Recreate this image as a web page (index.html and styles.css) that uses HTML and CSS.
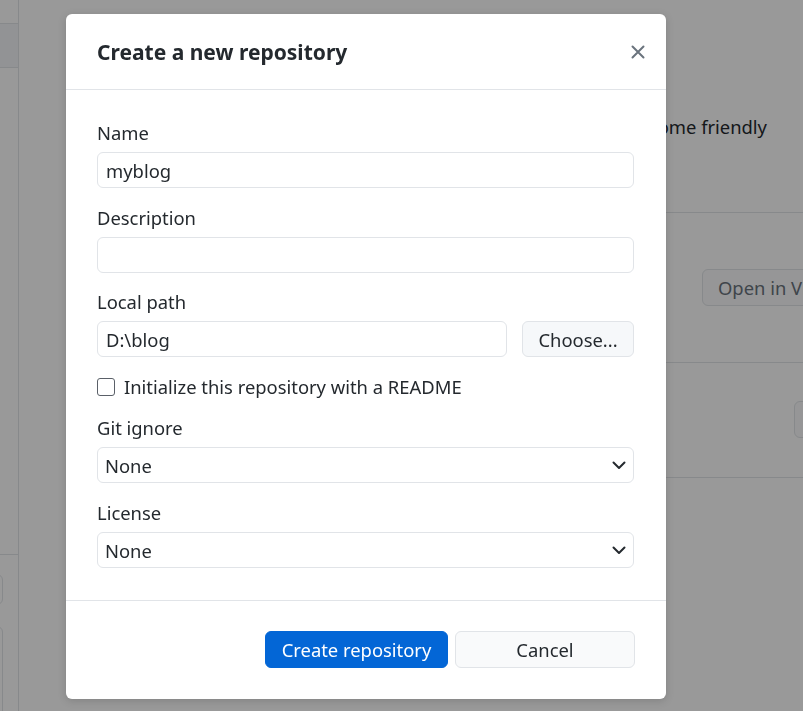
FILE: index.html
```html
<!DOCTYPE html>
<html lang="en">
<head>
<meta charset="utf-8">
<title>Create a new repository</title>
<link rel="stylesheet" href="styles.css">
</head>
<body>
<div class="app">
  <aside class="sidebar">
    <div class="sb-top"></div>
    <div class="sb-tab"></div>
    <div class="sb-fill"></div>
    <div class="sb-bottom">
      <div class="sb-box sb-box1"></div>
      <div class="sb-box sb-box2"></div>
    </div>
  </aside>
  <main class="main">
    <div class="main-left"></div>
    <section class="pane">
      <div class="pane-row row1"><p class="pane-text">become friendly</p></div>
      <div class="pane-row row2"><span class="ghost-btn">Open in Visual Studio Code</span></div>
      <div class="pane-row row3"><span class="ghost-btn ghost-far"></span></div>
      <div class="pane-row row4"></div>
    </section>
  </main>
</div>
<div class="overlay"></div>
<div class="modal" role="dialog" aria-labelledby="dlg-title">
  <header class="modal-header">
    <h1 id="dlg-title" class="modal-title">Create a new repository</h1>
    <button class="close-btn" aria-label="Close">
      <svg width="14" height="14" viewBox="0 0 14 14"><path d="M1.5 1.5 L12.5 12.5 M12.5 1.5 L1.5 12.5" stroke="#6a737d" stroke-width="2" stroke-linecap="round" fill="none"/></svg>
    </button>
  </header>
  <div class="modal-body">
    <div class="field">
      <label class="label">Name</label>
      <div class="input">myblog</div>
    </div>
    <div class="field">
      <label class="label">Description</label>
      <div class="input"></div>
    </div>
    <div class="field">
      <label class="label">Local path</label>
      <div class="path-row">
        <div class="input path-input">D:\blog</div>
        <button class="btn choose-btn">Choose...</button>
      </div>
    </div>
    <div class="check-row">
      <span class="checkbox"></span>
      <span class="check-label">Initialize this repository with a README</span>
    </div>
    <div class="field">
      <label class="label">Git ignore</label>
      <div class="input select">None
        <svg class="chev" width="14" height="9" viewBox="0 0 14 9"><path d="M1.5 1.5 L7 7 L12.5 1.5" stroke="#24292e" stroke-width="2" fill="none" stroke-linecap="round" stroke-linejoin="round"/></svg>
      </div>
    </div>
    <div class="field">
      <label class="label">License</label>
      <div class="input select">None
        <svg class="chev" width="14" height="9" viewBox="0 0 14 9"><path d="M1.5 1.5 L7 7 L12.5 1.5" stroke="#24292e" stroke-width="2" fill="none" stroke-linecap="round" stroke-linejoin="round"/></svg>
      </div>
    </div>
  </div>
  <footer class="modal-footer">
    <button class="btn btn-primary">Create repository</button>
    <button class="btn btn-cancel">Cancel</button>
  </footer>
</div>
</body>
</html>
```
FILE: styles.css
```css
* { box-sizing: border-box; }
html, body { margin: 0; padding: 0; }
body {
  width: 803px;
  height: 711px;
  overflow: hidden;
  background: #ffffff;
  font-family: "Noto Sans", "Segoe UI", sans-serif;
  color: #24292e;
}
.app {
  display: flex;
  height: 711px;
}
.sidebar {
  width: 19px;
  flex: 0 0 19px;
  border-right: 1px solid #e1e4e8;
  display: flex;
  flex-direction: column;
  overflow: hidden;
}
.sb-top { height: 24px; border-bottom: 1px solid #e1e4e8; }
.sb-tab { height: 44px; border-bottom: 1px solid #e1e4e8; background: #f4f6f8; }
.sb-fill { flex: 1; border-bottom: 1px solid #e1e4e8; }
.sb-bottom { height: 156px; padding-top: 19px; }
.sb-box {
  width: 12px;
  margin-left: -9px;
  border: 1px solid #e1e4e8;
  border-radius: 6px;
}
.sb-box1 { height: 31px; }
.sb-box2 { height: 120px; margin-top: 21px; }
.main { flex: 1; display: flex; min-width: 0; }
.main-left { flex: 0 0 581px; }
.pane { flex: 1; min-width: 0; display: flex; flex-direction: column; overflow: hidden; }
.pane-row { border-bottom: 1px solid #e1e4e8; }
.row1 {
  height: 213px;
  padding-top: 115px;
  padding-right: 36px;
  display: flex;
  justify-content: flex-end;
}
.row2 { height: 150px; padding-top: 56px; padding-left: 102px; white-space: nowrap; }
.row3 { height: 115px; padding-top: 38px; padding-left: 194px; white-space: nowrap; }
.row4 { flex: 1; border-bottom: none; }
.pane-text { margin: 0; font-size: 18.4px; line-height: 24px; white-space: nowrap; color: #24292e; }
.ghost-btn {
  display: inline-flex;
  align-items: center;
  height: 37px;
  padding: 0 15px;
  border: 1px solid #e1e4e8;
  border-radius: 6px;
  font-size: 18.4px;
  color: #6a737d;
  white-space: nowrap;
  background: #fafbfc;
  vertical-align: top;
}
.ghost-far { width: 60px; }
.overlay {
  position: fixed;
  inset: 0;
  background: rgba(0, 0, 0, 0.4);
}
.modal {
  position: absolute;
  left: 66px;
  top: 14px;
  width: 600px;
  background: #ffffff;
  border-radius: 6px;
  box-shadow: 0 2px 8px rgba(0, 0, 0, 0.15);
}
.modal-header {
  height: 76px;
  border-bottom: 1px solid #e1e4e8;
  display: flex;
  align-items: center;
  justify-content: space-between;
  padding: 0 21px 0 31px;
}
.modal-title {
  margin: 0;
  font-size: 21px;
  font-weight: 700;
  color: #24292e;
}
.close-btn {
  border: 0;
  background: none;
  padding: 0;
  width: 14px;
  height: 14px;
  display: flex;
}
.modal-body {
  padding: 31px 32px 32px 31px;
  display: flex;
  flex-direction: column;
  gap: 17.5px;
}
.field { display: flex; flex-direction: column; gap: 7px; }
.label { font-size: 18.4px; line-height: 24px; color: #24292e; }
.input {
  height: 36px;
  border: 1px solid #e1e4e8;
  border-radius: 6px;
  padding: 0 8px;
  font-size: 18.4px;
  line-height: 35px;
  color: #24292e;
  background: #fff;
}
.select {
  display: flex;
  align-items: center;
  justify-content: space-between;
  padding: 1px 7px 0 7px;
}
.path-row { display: flex; gap: 15px; }
.path-input { flex: 1; }
.btn {
  font-family: inherit;
  font-size: 18.4px;
  height: 37px;
  border-radius: 6px;
  border: 1px solid #e1e4e8;
  background: #f6f8fa;
  color: #24292e;
  padding: 0;
  cursor: pointer;
}
.choose-btn { width: 112px; height: 36px; }
.check-row {
  display: flex;
  align-items: center;
  gap: 9px;
  height: 24px;
}
.checkbox {
  width: 18px;
  height: 18px;
  border: 1px solid #5a6068;
  border-radius: 3px;
  background: #fff;
}
.check-label { font-size: 18.4px; color: #24292e; }
.modal-footer {
  border-top: 1px solid #e1e4e8;
  padding: 30px 31px 31px;
  display: flex;
  justify-content: flex-end;
  gap: 7px;
}
.btn-primary {
  width: 183px;
  background: #0366d6;
  border-color: #0366d6;
  color: #ffffff;
}
.btn-cancel {
  width: 180px;
  background: #f9fafb;
}
```
